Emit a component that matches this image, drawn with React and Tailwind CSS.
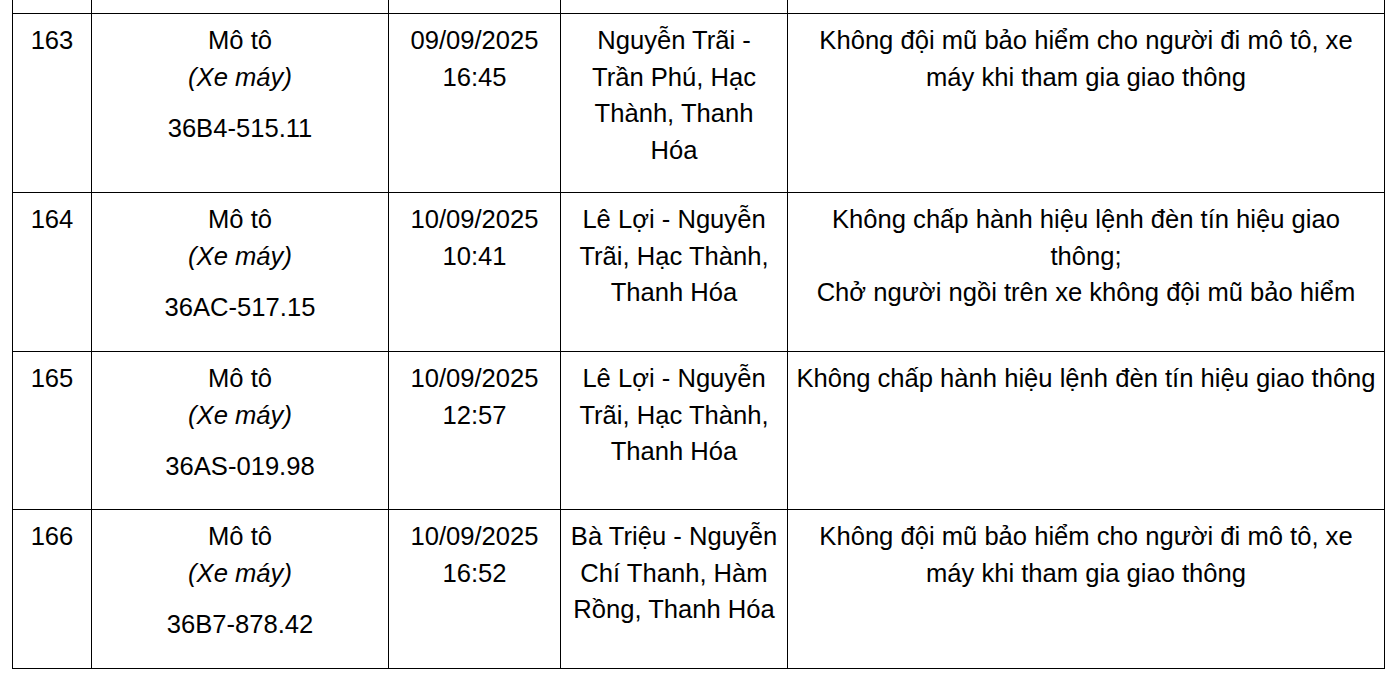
import React from "react";

const rows = [
  {
    h: "h-[179px]",
    no: "163",
    plate: "36B4-515.11",
    time: ["09/09/2025", "16:45"],
    place: ["Nguyễn Trãi -", "Trần Phú, Hạc", "Thành, Thanh", "Hóa"],
    act: ["Không đội mũ bảo hiểm cho người đi mô tô, xe", "máy khi tham gia giao thông"],
  },
  {
    h: "h-[159px]",
    no: "164",
    plate: "36AC-517.15",
    time: ["10/09/2025", "10:41"],
    place: ["Lê Lợi - Nguyễn", "Trãi, Hạc Thành,", "Thanh Hóa"],
    act: ["Không chấp hành hiệu lệnh đèn tín hiệu giao", "thông;", "Chở người ngồi trên xe không đội mũ bảo hiểm"],
  },
  {
    h: "h-[158px]",
    no: "165",
    plate: "36AS-019.98",
    time: ["10/09/2025", "12:57"],
    place: ["Lê Lợi - Nguyễn", "Trãi, Hạc Thành,", "Thanh Hóa"],
    act: ["Không chấp hành hiệu lệnh đèn tín hiệu giao thông"],
  },
  {
    h: "h-[159px]",
    no: "166",
    plate: "36B7-878.42",
    time: ["10/09/2025", "16:52"],
    place: ["Bà Triệu - Nguyễn", "Chí Thanh, Hàm", "Rồng, Thanh Hóa"],
    act: ["Không đội mũ bảo hiểm cho người đi mô tô, xe", "máy khi tham gia giao thông"],
  },
];

function Lines({ items }) {
  return (
    <>
      {items.map((t, i) => (
        <div key={i} className="whitespace-nowrap">
          {t}
        </div>
      ))}
    </>
  );
}

const grid = "grid w-[1373px] grid-cols-[80px_297px_172px_227px_597px] border-b border-black";
const cell = "border-r border-black pt-[8px] text-center";

export default function App() {
  return (
    <div
      className="w-[1392px] h-[692px] bg-white text-black pl-[12px] text-[25.6px] leading-[36.7px] overflow-hidden"
      style={{ fontFamily: '"Liberation Sans", Arial, sans-serif' }}
    >
      <div className={`${grid} h-[14px]`}>
        <div className="border-l border-r border-black" />
        <div className="border-r border-black" />
        <div className="border-r border-black" />
        <div className="border-r border-black" />
        <div className="border-r border-black" />
      </div>
      {rows.map((r) => (
        <div key={r.no} className={`${grid} ${r.h}`}>
          <div className={`${cell} border-l`}>{r.no}</div>
          <div className={cell}>
            <div>Mô tô</div>
            <div className="italic">(Xe máy)</div>
            <div className="mt-[15px]">{r.plate}</div>
          </div>
          <div className={cell}>
            <Lines items={r.time} />
          </div>
          <div className={cell}>
            <Lines items={r.place} />
          </div>
          <div className={cell}>
            <Lines items={r.act} />
          </div>
        </div>
      ))}
    </div>
  );
}
